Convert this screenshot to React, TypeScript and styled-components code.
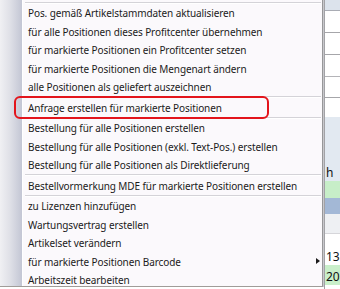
import React from "react";
import styled, { createGlobalStyle } from "styled-components";

const GlobalStyle = createGlobalStyle`
  html, body { margin: 0; padding: 0; background: #ffffff; overflow: hidden; }
  #root { width: 340px; height: 289px; }
`;

const Screen = styled.div`
  display: flex;
  width: 340px;
  height: 289px;
  position: relative;
  overflow: hidden;
  font-family: "Noto Sans", "Open Sans", sans-serif;
`;

const Menu = styled.div`
  width: 323px;
  height: 287px;
  flex: none;
  display: flex;
  flex-direction: column;
  padding-top: 1.75px;
  box-sizing: border-box;
  background: linear-gradient(
    to right,
    #f0f0f3 0px,
    #dfe0e7 10px,
    #c3c6d4 22px,
    #ffffff 22px,
    #ffffff 23px,
    #fbf9fc 23px
  );
  border-right: 1px solid #979799;
  border-bottom: 1px solid #a09c98;
  box-shadow: 1px 0 0 #c8c8cc;
`;

const Item = styled.div`
  height: 18.5px;
  flex: none;
  display: flex;
  align-items: center;
  padding-left: 28px;
  padding-right: 4px;
  font-size: 10px;
  letter-spacing: -0.1px;
  color: #1b1b1b;
  white-space: nowrap;
  position: relative;
`;

const Separator = styled.div`
  flex: none;
  margin: 0 1px 0 25px;
  border-top: 1px solid #d4d3d8;
  border-bottom: 1px solid #ffffff;
  height: 0;
`;

const SubArrow = styled.span`
  position: absolute;
  right: 2px;
  top: 50%;
  margin-top: -3.5px;
  width: 0;
  height: 0;
  border-top: 3.5px solid transparent;
  border-bottom: 3.5px solid transparent;
  border-left: 4px solid #1b1b1b;
`;

const Highlight = styled.div`
  position: absolute;
  left: 14px;
  top: 96px;
  width: 255px;
  height: 23px;
  box-sizing: border-box;
  border: 2px solid #e3151c;
  border-radius: 6px;
  pointer-events: none;
`;

const Strip = styled.div`
  flex: 1;
  display: flex;
  flex-direction: column;
  margin-left: 1px;
  border-left: 1px solid #a2a2a6;
  overflow: hidden;
`;

const Cell = styled.div<{ $h: number; $bg: string; $line?: string }>`
  height: ${(p) => p.$h}px;
  flex: none;
  background: ${(p) => p.$bg};
  border-bottom: ${(p) => (p.$line ? `1px solid ${p.$line}` : "none")};
  display: flex;
  align-items: flex-end;
  font-family: "Noto Sans", sans-serif;
  font-size: 12px;
  line-height: 1;
  color: #111;
  overflow: hidden;
  white-space: nowrap;
`;

const CellText = styled.span`
  padding: 0 0 2px 1px;
`;

const groups: (string | null)[] = [
  null,
  "Pos. gemäß Artikelstammdaten aktualisieren",
  "für alle Positionen dieses Profitcenter übernehmen",
  "für markierte Positionen ein Profitcenter setzen",
  "für markierte Positionen die Mengenart ändern",
  "alle Positionen als geliefert auszeichnen",
  null,
  "Anfrage erstellen für markierte Positionen",
  null,
  "Bestellung für alle Positionen erstellen",
  "Bestellung für alle Positionen (exkl. Text-Pos.) erstellen",
  "Bestellung für alle Positionen als Direktlieferung",
  null,
  "Bestellvormerkung MDE für markierte Positionen erstellen",
  null,
  "zu Lizenzen hinzufügen",
  "Wartungsvertrag erstellen",
  "Artikelset verändern",
  "für markierte Positionen Barcode",
  "Arbeitszeit bearbeiten",
];

export default function App() {
  return (
    <>
      <GlobalStyle />
      <Screen>
        <Menu>
          {groups.map((g, i) =>
            g === null ? (
              <Separator key={i} />
            ) : (
              <Item key={i}>
                {g}
                {g === "für markierte Positionen Barcode" && <SubArrow />}
              </Item>
            )
          )}
        </Menu>
        <Strip>
          <Cell $h={10} $bg="#dce3ec" $line="#a9acb4" />
          <Cell $h={21} $bg="#ffffff" $line="#a6a6aa" />
          <Cell $h={21} $bg="#ffffff" $line="#a6a6aa" />
          <Cell $h={21} $bg="#ffffff" $line="#b4b4b8" />
          <Cell $h={20} $bg="#ffffff" $line="#a6a6aa" />
          <Cell $h={19} $bg="#ffffff" />
          <Cell $h={64} $bg="#e2e9f1">
            <CellText>h</CellText>
          </Cell>
          <Cell $h={17} $bg="#c7eec8" />
          <Cell $h={16} $bg="#a3b8d6" />
          <Cell $h={19} $bg="#eef0f3" $line="#d6d6da" />
          <Cell $h={31} $bg="#ffffff">
            <CellText>138</CellText>
          </Cell>
          <Cell $h={20} $bg="#c9efca">
            <CellText>208</CellText>
          </Cell>
        </Strip>
        <Highlight />
      </Screen>
    </>
  );
}
